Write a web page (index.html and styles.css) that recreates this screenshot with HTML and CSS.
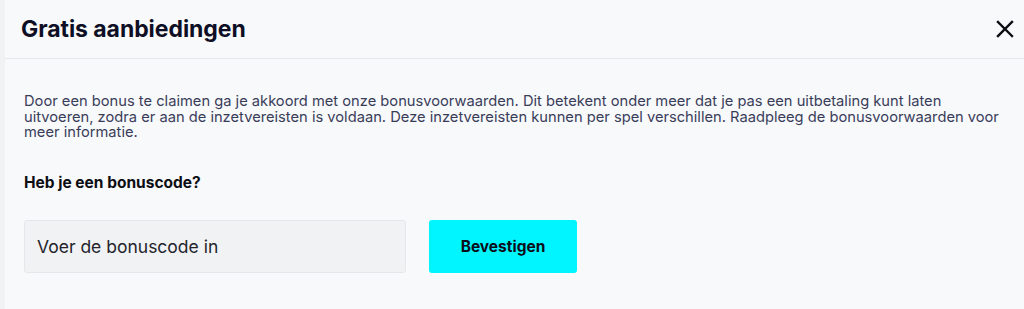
FILE: index.html
```html
<!DOCTYPE html>
<html lang="nl">
<head>
<meta charset="utf-8">
<title>Gratis aanbiedingen</title>
<link rel="stylesheet" href="styles.css">
</head>
<body>
<div class="page">
  <div class="edge"></div>
  <div class="modal">
    <header class="modal-header">
      <h1 class="modal-title">Gratis aanbiedingen</h1>
      <button class="close" aria-label="Sluiten">
        <svg width="18" height="18" viewBox="0 0 18 18"><path d="M2 2 L16 16 M16 2 L2 16" stroke="#0b0b12" stroke-width="2.4" stroke-linecap="square" fill="none"/></svg>
      </button>
    </header>
    <div class="modal-body">
      <p class="terms">Door een bonus te claimen ga je akkoord met onze bonusvoorwaarden. Dit betekent onder meer dat je pas een uitbetaling kunt laten uitvoeren, zodra er aan de inzetvereisten is voldaan. Deze inzetvereisten kunnen per spel verschillen. Raadpleeg de bonusvoorwaarden voor meer informatie.</p>
      <h2 class="question">Heb je een bonuscode?</h2>
      <form class="code-form">
        <input class="code-input" type="text" placeholder="Voer de bonuscode in">
        <button class="confirm" type="button">Bevestigen</button>
      </form>
    </div>
  </div>
</div>
</body>
</html>
```
FILE: styles.css
```css
html, body {
  margin: 0;
  padding: 0;
  background: #f8f9fa;
  font-family: Inter, "Noto Sans", sans-serif;
}
.page {
  display: flex;
  width: 1024px;
  height: 309px;
  overflow: hidden;
}
.edge {
  width: 5px;
  background: #f1f2f4;
  flex: none;
}
.modal {
  flex: 1;
  background: #f8f9fa;
}
.modal-header {
  height: 59px;
  border-bottom: 1px solid #e6e7ea;
  display: flex;
  align-items: center;
  justify-content: space-between;
  padding: 0 10px 0 16px;
  box-sizing: border-box;
}
.modal-title {
  margin: 0;
  font-size: 23px;
  font-weight: 700;
  color: #0e0f25;
  letter-spacing: -0.05px;
}
.close {
  border: 0;
  background: none;
  padding: 0;
  width: 18px;
  height: 18px;
  display: flex;
  cursor: pointer;
}
.modal-body {
  padding: 35px 0 0 19px;
}
.terms {
  margin: 0;
  font-size: 14.7px;
  line-height: 15.6px;
  color: #3a3d5a;
  max-width: 980px;
}
.question {
  margin: 32px 0 0;
  font-size: 15.5px;
  font-weight: 700;
  color: #0d0d14;
}
.code-form {
  display: flex;
  gap: 23px;
  margin-top: 28px;
}
.code-input {
  width: 382px;
  height: 53px;
  box-sizing: border-box;
  background: #f1f2f4;
  border: 1px solid #e6e7ea;
  border-radius: 3px;
  padding: 0 12px;
  font-family: inherit;
  font-size: 17.5px;
  color: #1b1b22;
}
.code-input::placeholder {
  color: #24242c;
  opacity: 1;
}
.confirm {
  width: 148px;
  height: 53px;
  border: 0;
  border-radius: 3px;
  background: #00f5ff;
  font-family: inherit;
  font-size: 15.5px;
  font-weight: 700;
  color: #0d0d1a;
  cursor: pointer;
}
```
